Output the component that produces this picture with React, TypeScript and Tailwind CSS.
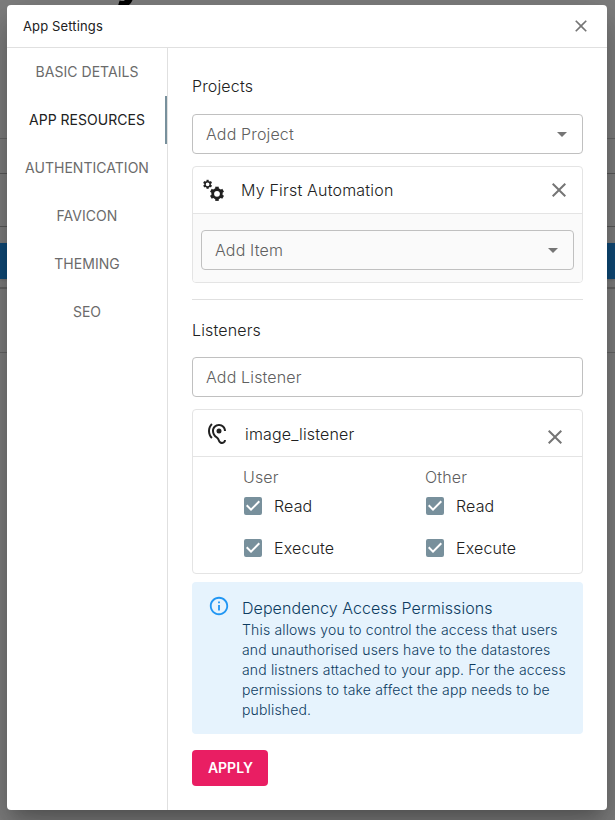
import React from "react";
import { MdArrowDropDown, MdCheckBox, MdClose, MdHearing, MdInfoOutline } from "react-icons/md";

const tabs = ["BASIC DETAILS", "APP RESOURCES", "AUTHENTICATION", "FAVICON", "THEMING", "SEO"];

function Gear({ cx, cy, r, ring, stroke, tooth }: { cx: number; cy: number; r: number; ring: number; stroke: number; tooth: number }) {
  return (
    <g transform={`translate(${cx} ${cy})`} fill="currentColor">
      <circle r={ring} fill="none" stroke="currentColor" strokeWidth={stroke} />
      {[0, 60, 120, 180, 240, 300].map((angle) => (
        <rect key={angle} x={-tooth / 2} y={-r} width={tooth} height={r - ring} transform={`rotate(${angle})`} />
      ))}
    </g>
  );
}

function Gears() {
  return (
    <svg className="h-6 w-6 text-[#212121]" viewBox="0 0 24 24">
      <Gear cx={5.6} cy={6.3} r={4.5} ring={2.6} stroke={1.5} tooth={2.2} />
      <Gear cx={15} cy={15.8} r={7.1} ring={4.3} stroke={2.8} tooth={3.5} />
    </svg>
  );
}

function Field({ label, arrow }: { label: string; arrow?: boolean }) {
  return (
    <div className="flex h-10 shrink-0 items-center justify-between rounded border border-[#c0c0c0] pr-2 pl-[13px] text-[#606060]">
      <span>{label}</span>
      {arrow && <MdArrowDropDown size={24} className="text-[#757575]" />}
    </div>
  );
}

function Permissions({ title }: { title: string }) {
  return (
    <div className="flex w-[182px] shrink-0 flex-col">
      <div className="h-[23px] leading-6 text-[#606060]">{title}</div>
      {["Read", "Execute"].map((name) => (
        <div key={name} className="mb-[6px] flex h-9 items-center">
          <MdCheckBox size={24} className="-ml-[2px] text-[#78909c]" />
          <span className="ml-[9px]">{name}</span>
        </div>
      ))}
    </div>
  );
}

function Backdrop() {
  return (
    <div className="relative h-full overflow-hidden bg-white">
      <div className="h-[139px] border-b border-[#d0d0d0]" />
      <div className="h-[35px] border-b border-[#b4b4b4]" />
      <div className="h-[53px] border-b border-[#b4b4b4]" />
      <div className="mt-4 h-9 bg-[#2196f3] shadow" />
      <div className="h-[10px] border-b-2 border-[#cccccc]" />
      <div className="h-[64px] border-b border-[#cccccc]" />
      <span className="absolute -top-[50px] left-[115px] text-[50px] leading-[56px] font-bold text-black">y</span>
      <div className="absolute inset-0 bg-black/50" />
    </div>
  );
}

export default function App() {
  return (
    <div className="relative h-[820px] w-[615px] overflow-hidden font-['Inter',sans-serif] text-base font-light tracking-[0.15px] text-[#212121]">
      <Backdrop />
      <div className="absolute top-[5px] left-[7px] flex h-[805px] w-[600px] flex-col rounded bg-white shadow-[0_11px_15px_-7px_rgba(0,0,0,0.2),0_24px_38px_3px_rgba(0,0,0,0.14),0_9px_46px_8px_rgba(0,0,0,0.12)]">
        <header className="flex h-[43px] shrink-0 items-center justify-between border-b border-[#e0e0e0] pr-4 pl-4">
          <h1 className="pt-px text-[13px] font-normal tracking-[0.13px]">App Settings</h1>
          <MdClose size={20} className="text-[#757575]" />
        </header>
        <div className="flex min-h-0 flex-1">
          <nav className="flex w-[161px] shrink-0 flex-col border-r border-[#e0e0e0]">
            {tabs.map((tab) => (
              <div
                key={tab}
                className={
                  tab === "APP RESOURCES"
                    ? "flex h-12 items-center justify-center border-r-2 border-[#78909c] pl-[2px] text-sm font-normal tracking-[0.03px] text-[#212121]"
                    : "flex h-12 items-center justify-center border-r-2 border-transparent pl-[2px] text-sm font-normal tracking-[0.03px] text-[#6b6b6b]"
                }
              >
                {tab}
              </div>
            ))}
          </nav>
          <main className="flex w-[439px] shrink-0 flex-col px-6 pt-[26px]">
            <h2 className="mb-4 h-6 leading-6">Projects</h2>
            <Field label="Add Project" arrow />
            <section className="mt-3 h-[117px] shrink-0 overflow-hidden rounded border border-[#e4e4e4]">
              <div className="flex h-[47px] items-center border-b border-[#e4e4e4] pr-[11px] pl-[9px]">
                <Gears />
                <span className="ml-[15px] flex-1 tracking-[0.2px]">My First Automation</span>
                <MdClose size={24} className="text-[#757575]" />
              </div>
              <div className="h-full bg-[#fafafa] px-2 pt-4">
                <Field label="Add Item" arrow />
              </div>
            </section>
            <hr className="mt-4 border-[#e0e0e0]" />
            <h2 className="mt-[18px] mb-[15px] h-6 leading-6">Listeners</h2>
            <Field label="Add Listener" />
            <section className="mt-3 h-[165px] shrink-0 rounded border border-[#e4e4e4]">
              <div className="flex h-[47px] items-center border-b border-[#e4e4e4] pr-[15px] pl-3">
                <MdHearing size={24} className="mt-[2px]" />
                <span className="ml-4 flex-1 pt-[2px]">image_listener</span>
                <MdClose size={24} className="mt-[7px] text-[#757575]" />
              </div>
              <div className="flex pt-2 pl-[50px]">
                <Permissions title="User" />
                <Permissions title="Other" />
              </div>
            </section>
            <section className="mt-2 flex h-[152px] shrink-0 rounded bg-[#e6f3fd] pt-[13px] pr-4 pl-4 text-[#0d3c61]">
              <MdInfoOutline size={22} className="shrink-0 text-[#2196f3]" />
              <div className="ml-3 flex-1">
                <h3 className="mt-px h-6 leading-6 tracking-[0.07px]">Dependency Access Permissions</h3>
                <p className="text-sm leading-5 font-light tracking-[0.16px] whitespace-nowrap">
                  This allows you to control the access that users<br />
                  and unauthorised users have to the datastores<br />
                  and listners attached to your app. For the access<br />
                  permissions to take affect the app needs to be<br />
                  published.
                </p>
              </div>
            </section>
            <button className="mt-4 h-9 w-[76px] shrink-0 rounded bg-[#e91e63] pl-px text-sm font-semibold tracking-normal text-white">APPLY</button>
          </main>
        </div>
      </div>
    </div>
  );
}
